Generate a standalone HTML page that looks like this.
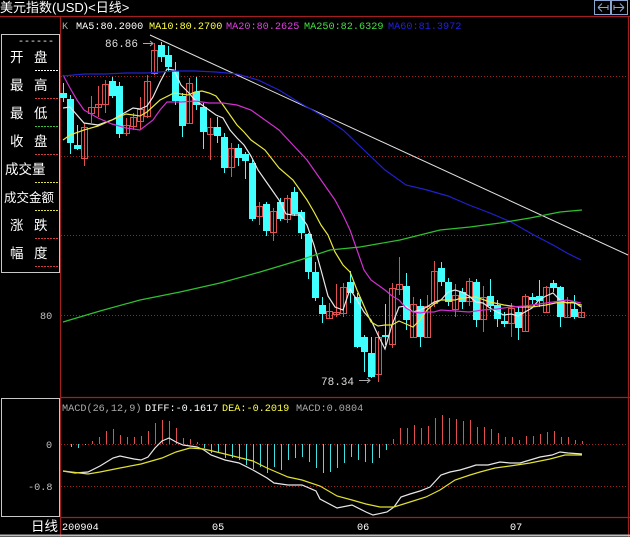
<!DOCTYPE html>
<html><head><meta charset="utf-8"><style>
html,body{margin:0;padding:0;background:#000;width:630px;height:537px;overflow:hidden}
svg{display:block}
text{font-family:"Liberation Mono","Noto Sans CJK SC",monospace;font-size:10.2px}
.c{font-family:"Liberation Sans","Noto Sans CJK SC",sans-serif;font-size:13.5px;fill:#fff}
</style></head><body>
<svg id="s" width="630" height="537" xmlns="http://www.w3.org/2000/svg">
<rect width="630" height="537" fill="#000"/>
<text x="0" y="12" class="c" style="font-size:13px">美元指数(USD)&lt;日线&gt;</text>
<g fill="none" stroke="#8aa6d0" stroke-width="1">
<rect x="594.5" y="0.5" width="16" height="14"/><rect x="611.5" y="0.5" width="16" height="14"/>
<path d="M598 7.5h10M598 7.5l4-4M598 7.5l4 4M608 5v5"/>
<path d="M624 7.5h-10M624 7.5l-4-4M624 7.5l-4 4M614 5v5"/>
</g>
<g stroke="#a02020" stroke-width="1.2">
<line x1="0" y1="16.5" x2="630" y2="16.5"/>
<line x1="60.5" y1="17" x2="60.5" y2="537"/>
<line x1="628.5" y1="17" x2="628.5" y2="537"/>
<line x1="60" y1="397.5" x2="630" y2="397.5"/>
<line x1="60" y1="517.5" x2="630" y2="517.5"/>
</g>
<line x1="0" y1="535.5" x2="630" y2="535.5" stroke="#bbb" stroke-width="2"/>
<g stroke="#a02020" stroke-dasharray="1,2">
<line x1="61" y1="76.5" x2="628" y2="76.5"/><line x1="61" y1="156.5" x2="628" y2="156.5"/>
<line x1="61" y1="235.5" x2="628" y2="235.5"/><line x1="61" y1="315.5" x2="628" y2="315.5"/>
<line x1="61" y1="444.5" x2="628" y2="444.5"/><line x1="61" y1="486.5" x2="628" y2="486.5"/>
</g>
<rect x="1.5" y="34.5" width="58" height="238" fill="none" stroke="#c8c8c8"/>
<rect x="1.5" y="398.5" width="58" height="118" fill="none" stroke="#c8c8c8"/>
<g>
<text x="18" y="44" style="font-size:10px" fill="#fff">------</text>
<text x="10" y="62" class="c">开</text><text x="34" y="62" class="c">盘</text>
<text x="10" y="90" class="c">最</text><text x="34" y="90" class="c">高</text>
<text x="10" y="118" class="c">最</text><text x="34" y="118" class="c">低</text>
<text x="10" y="146" class="c">收</text><text x="34" y="146" class="c">盘</text>
<text x="5" y="174" class="c">成交量</text>
<text x="4" y="202" class="c" style="font-size:12.5px">成交金额</text>
<text x="10" y="230" class="c">涨</text><text x="34" y="230" class="c">跌</text>
<text x="10" y="258" class="c">幅</text><text x="34" y="258" class="c">度</text>
</g>
<g stroke-dasharray="2,1" stroke-width="1">
<line x1="35" y1="70.5" x2="58" y2="70.5" stroke="#fff"/>
<line x1="35" y1="98.5" x2="58" y2="98.5" stroke="#d04040"/>
<line x1="35" y1="126.5" x2="58" y2="126.5" stroke="#40c040"/>
<line x1="35" y1="154.5" x2="58" y2="154.5" stroke="#d04040"/>
<line x1="35" y1="182.5" x2="58" y2="182.5" stroke="#e0e040"/>
<line x1="35" y1="210.5" x2="58" y2="210.5" stroke="#e0e040"/>
<line x1="35" y1="238.5" x2="58" y2="238.5" stroke="#d04040"/>
<line x1="35" y1="266.5" x2="58" y2="266.5" stroke="#d04040"/>
</g>
<text x="40" y="319" fill="#c0c0c0">80</text>
<text x="46" y="448" fill="#c0c0c0">0</text>
<text x="28" y="490" fill="#c0c0c0">-0.8</text>
<text x="31" y="531" class="c" style="font-size:13.5px">日线</text>
<text x="62" y="530" fill="#fff">200904</text>
<text x="212" y="530" fill="#fff">05</text>
<text x="357" y="530" fill="#fff">06</text>
<text x="510" y="530" fill="#fff">07</text>
<text x="62" y="29" fill="#aaa">K</text>
<text x="76" y="29" fill="#fff">MA5:80.2000</text>
<text x="149" y="29" fill="#ffff40">MA10:80.2700</text>
<text x="226" y="29" fill="#e040e0">MA20:80.2625</text>
<text x="304" y="29" fill="#40e040">MA250:82.6329</text>
<text x="388" y="29" fill="#2020e0">MA60:81.3972</text>
<text x="62" y="411" fill="#aaa">MACD(26,12,9)</text>
<text x="145" y="411" fill="#fff">DIFF:-0.1617</text>
<text x="222" y="411" fill="#ffff40">DEA:-0.2019</text>
<text x="296" y="411" fill="#aaa">MACD:0.0804</text>
<text x="105" y="47" fill="#ddd" style="font-size:11px">86.86</text>
<path d="M143 43.5h10M150 41l3 2.5-3 2.5" stroke="#aaa" fill="none"/>
<text x="321" y="385" fill="#ddd" style="font-size:11px">78.34</text>
<path d="M359 380.5h11M367 378l3 2.5-3 2.5" stroke="#aaa" fill="none"/>
<line x1="150" y1="35" x2="628" y2="255" stroke="#e0e0e0"/>
<g id="g"></g>
</svg>
<script>
var NS="http://www.w3.org/2000/svg",g=document.getElementById('g');
function el(n,a){var e=document.createElementNS(NS,n);for(var k in a)e.setAttribute(k,a[k]);g.appendChild(e);return e;}
function pl(pts,c){el('polyline',{points:pts.map(function(p){return p.join(',')}).join(' '),fill:'none',stroke:c,'stroke-width':1.2});}
var C=[[93,98,83,102,0],[99,143,95,154,0],[145,149,125,150,0],[127,158,123,166,1],[107,113,96,123,1],[104,107,86,117,1],[84,104,80,113,1],[81,96,77,98,0],[86,134,82,138,0],[125,133,118,136,1],[117,126,113,130,1],[109,121,97,130,1],[81,116,75,118,1],[50,73,43,75,1],[45,57,42,62,0],[55,67,46,72,0],[71,101,62,105,0],[96,126,93,137,0],[83,123,78,123,1],[92,105,77,110,0],[107,132,103,149,0],[127,134,118,160,1],[127,136,117,143,0],[137,168,133,173,0],[148,167,143,177,1],[148,158,144,166,0],[154,161,152,179,0],[163,219,160,221,0],[206,216,202,225,1],[204,231,202,236,0],[211,232,208,241,1],[202,219,198,221,0],[198,219,195,223,1],[192,214,187,216,0],[212,233,210,239,0],[234,272,233,279,0],[272,298,262,301,0],[305,314,297,323,0],[311,318,303,319,1],[312,314,284,317,1],[287,313,283,317,1],[282,293,271,303,0],[297,347,293,348,0],[337,352,335,372,0],[353,377,337,378,0],[337,374,331,382,1],[335,337,304,345,0],[288,344,283,348,1],[284,289,257,295,1],[286,320,273,330,0],[304,337,297,337,1],[306,337,299,347,0],[306,337,295,338,1],[271,303,261,307,1],[268,282,262,286,0],[282,302,278,306,0],[295,309,284,317,1],[292,302,288,309,0],[281,301,278,306,1],[282,320,279,327,0],[297,319,286,332,1],[296,306,279,312,0],[305,319,300,327,0],[321,324,312,327,0],[308,323,303,337,1],[312,328,307,340,0],[296,331,294,332,1],[297,300,293,304,0],[296,301,280,307,0],[287,312,286,313,1],[283,288,280,292,0],[287,317,286,327,0],[302,317,297,317,1],[309,317,295,319,0],[312,317,304,317,1]];
C.forEach(function(c,i){var x=63+7*i,col=c[4]?'#e05050':'#40ffff';
 el('line',{x1:x+.5,y1:c[2],x2:x+.5,y2:c[3],stroke:col});
 if(c[4]) el('rect',{x:x-2.5,y:c[0]+.5,width:6,height:Math.max(c[1]-c[0],1),fill:'none',stroke:col});
 else el('rect',{x:x-3,y:c[0],width:7,height:Math.max(c[1]-c[0],1),fill:col});
});
pl([[63,108],[70,107],[84,123],[98,125],[112,120],[126,112],[133,108],[140,109],[147,106],[153,97],[160,82],[167,69],[174,70],[181,85],[188,92],[195,100],[202,105],[209,110],[216,115],[223,118],[230,130],[237,138],[244,145],[251,156],[258,170],[265,180],[272,190],[279,200],[286,214],[293,215],[300,215],[307,225],[314,245],[321,270],[328,296],[335,307],[343,310],[350,289],[357,300],[364,312],[371,320],[378,335],[385,349],[392,325],[399,307],[406,306],[413,312],[420,310],[427,307],[434,302],[441,300],[448,292],[455,290],[462,292],[469,296],[476,302],[483,303],[490,308],[497,312],[504,315],[511,314],[518,316],[525,312],[532,308],[539,300],[546,296],[553,293],[560,300],[567,303],[574,302],[581,307]],'#e8e8e8');
pl([[63,140],[70,135],[84,130],[98,126],[112,120],[126,114],[140,116],[147,112],[160,100],[174,93],[188,95],[195,92],[202,91],[209,93],[216,96],[223,105],[230,115],[237,125],[244,132],[251,140],[265,150],[279,168],[293,180],[307,200],[314,212],[321,225],[328,235],[335,252],[343,265],[350,272],[357,290],[364,306],[371,322],[378,326],[385,325],[392,325],[399,321],[406,324],[413,327],[420,320],[427,310],[434,304],[441,300],[448,300],[455,300],[462,298],[476,297],[490,302],[504,305],[518,307],[532,307],[546,305],[560,302],[574,303],[581,305]],'#e8e840');
pl([[63,75],[70,88],[77,100],[84,110],[98,118],[112,124],[126,128],[140,130],[153,120],[160,110],[167,102],[181,102],[195,101],[209,103],[223,103],[237,105],[251,110],[265,120],[279,130],[293,145],[307,160],[321,180],[335,200],[343,215],[350,230],[357,250],[364,270],[371,280],[378,285],[385,290],[392,296],[399,300],[406,308],[413,312],[420,313],[427,312],[434,312],[441,310],[455,311],[469,312],[483,310],[497,309],[511,307],[525,306],[539,304],[553,302],[567,300],[581,303]],'#d030d0');
pl([[63,76],[84,74],[105,74],[126,73],[147,73],[160,72],[174,71],[195,71],[216,72],[237,74],[258,80],[279,90],[300,103],[321,115],[343,130],[364,150],[385,170],[406,185],[427,190],[448,196],[469,205],[490,213],[511,222],[532,234],[553,245],[567,253],[581,260]],'#2020d0');
pl([[63,322],[100,311],[140,300],[180,292],[220,283],[260,272],[300,260],[330,250],[360,247],[400,240],[440,230],[470,227],[500,223],[530,218],[560,212],[582,210]],'#30c030');
var B=[447,448,445,441,437,431,429,435,437,437,436,431,423,420,421,428,438,439,442,448,453,453,458,458,460,465,469,467,473,467,470,460,458,457,462,468,473,472,468,463,457,460,462,463,458,450,439,428,428,425,428,426,418,415,418,419,421,420,427,427,429,433,437,437,440,436,436,434,432,431,437,437,440,441];
B.forEach(function(y,i){var x=64+7*(i+1)+.5;el('line',{x1:x,y1:444,x2:x,y2:y,stroke:y<444?'#e05050':'#40e0e0'});});
pl([[63,471],[75,473],[88,472],[100,466],[113,458],[120,456],[134,459],[141,460],[148,457],[155,448],[162,441],[169,438],[176,442],[183,445],[190,446],[197,447],[204,450],[211,455],[225,460],[239,463],[253,470],[267,478],[274,483],[288,485],[302,485],[316,491],[320,499],[337,508],[352,505],[366,512],[373,515],[387,512],[394,507],[401,497],[410,494],[420,491],[430,487],[441,475],[450,472],[460,470],[470,467],[476,465],[488,465],[500,462],[510,463],[520,463],[530,460],[540,457],[552,455],[560,452],[568,453],[582,454]],'#e8e8e8');
pl([[63,471],[88,474],[100,472],[120,468],[141,464],[148,462],[162,458],[176,452],[190,448],[204,449],[225,454],[253,461],[267,468],[288,477],[302,480],[320,486],[337,496],[352,500],[366,504],[380,507],[394,507],[410,502],[426,497],[440,490],[455,480],[470,475],[480,472],[495,468],[510,466],[530,463],[550,459],[565,455],[582,455]],'#e0e030');
</script>
</body></html>
